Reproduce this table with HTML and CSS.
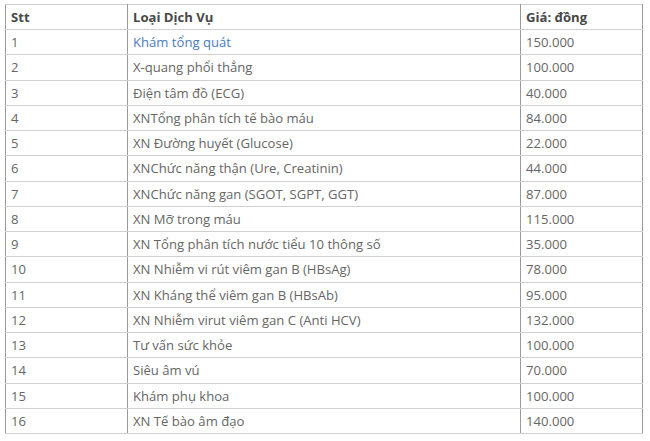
FILE: index.html
```html
<!DOCTYPE html>
<html lang="vi">
<head>
<meta charset="utf-8">
<link rel="stylesheet" href="styles.css">
</head>
<body>
<table class="price-table">
  <colgroup>
    <col class="c-stt">
    <col class="c-name">
    <col class="c-price">
  </colgroup>
  <thead>
    <tr><th>Stt</th><th>Loại Dịch Vụ</th><th>Giá: đồng</th></tr>
  </thead>
  <tbody>
    <tr><td>1</td><td><a class="link" href="#">Khám tổng quát</a></td><td>150.000</td></tr>
    <tr><td>2</td><td>X-quang phổi thẳng</td><td>100.000</td></tr>
    <tr><td>3</td><td>Điện tâm đồ (ECG)</td><td>40.000</td></tr>
    <tr><td>4</td><td>XNTổng phân tích tế bào máu</td><td>84.000</td></tr>
    <tr><td>5</td><td>XN Đường huyết (Glucose)</td><td>22.000</td></tr>
    <tr><td>6</td><td>XNChức năng thận (Ure, Creatinin)</td><td>44.000</td></tr>
    <tr><td>7</td><td>XNChức năng gan (SGOT, SGPT, GGT)</td><td>87.000</td></tr>
    <tr><td>8</td><td>XN Mỡ trong máu</td><td>115.000</td></tr>
    <tr><td>9</td><td>XN Tổng phân tích nước tiểu 10 thông số</td><td>35.000</td></tr>
    <tr><td>10</td><td>XN Nhiễm vi rút viêm gan B (HBsAg)</td><td>78.000</td></tr>
    <tr><td>11</td><td>XN Kháng thể viêm gan B (HBsAb)</td><td>95.000</td></tr>
    <tr><td>12</td><td>XN Nhiễm virut viêm gan C (Anti HCV)</td><td>132.000</td></tr>
    <tr><td>13</td><td>Tư vấn sức khỏe</td><td>100.000</td></tr>
    <tr><td>14</td><td>Siêu âm vú</td><td>70.000</td></tr>
    <tr><td>15</td><td>Khám phụ khoa</td><td>100.000</td></tr>
    <tr><td>16</td><td>XN Tế bào âm đạo</td><td>140.000</td></tr>
  </tbody>
</table>
</body>
</html>
```
FILE: styles.css
```css
html, body {
  margin: 0;
  padding: 0;
  background: #ffffff;
}
body {
  padding: 4px 8px 0 5px;
  font-family: "Open Sans", "Liberation Sans", sans-serif;
  font-size: 13.1px;
  color: #666666;
}
.price-table {
  width: 637px;
  border-collapse: collapse;
  border: 1px solid #7f7f7f;
  table-layout: fixed;
}
.c-stt { width: 122px; }
.c-name { width: 393px; }
.c-price { width: 122px; }
.price-table th,
.price-table td {
  text-align: left;
  padding: 0 5px;
  height: 24.25px;
  line-height: 18px;
  border-left: 1px solid #9a9a9a;
  border-right: 1px solid #9a9a9a;
  border-top: 1px solid #d0d0d0;
  border-bottom: 1px solid #d0d0d0;
  vertical-align: middle;
  white-space: nowrap;
}
.price-table th {
  height: 24px;
  font-weight: 700;
  color: #484848;
}
.link {
  color: #4a7cc4;
  text-decoration: none;
}
```
